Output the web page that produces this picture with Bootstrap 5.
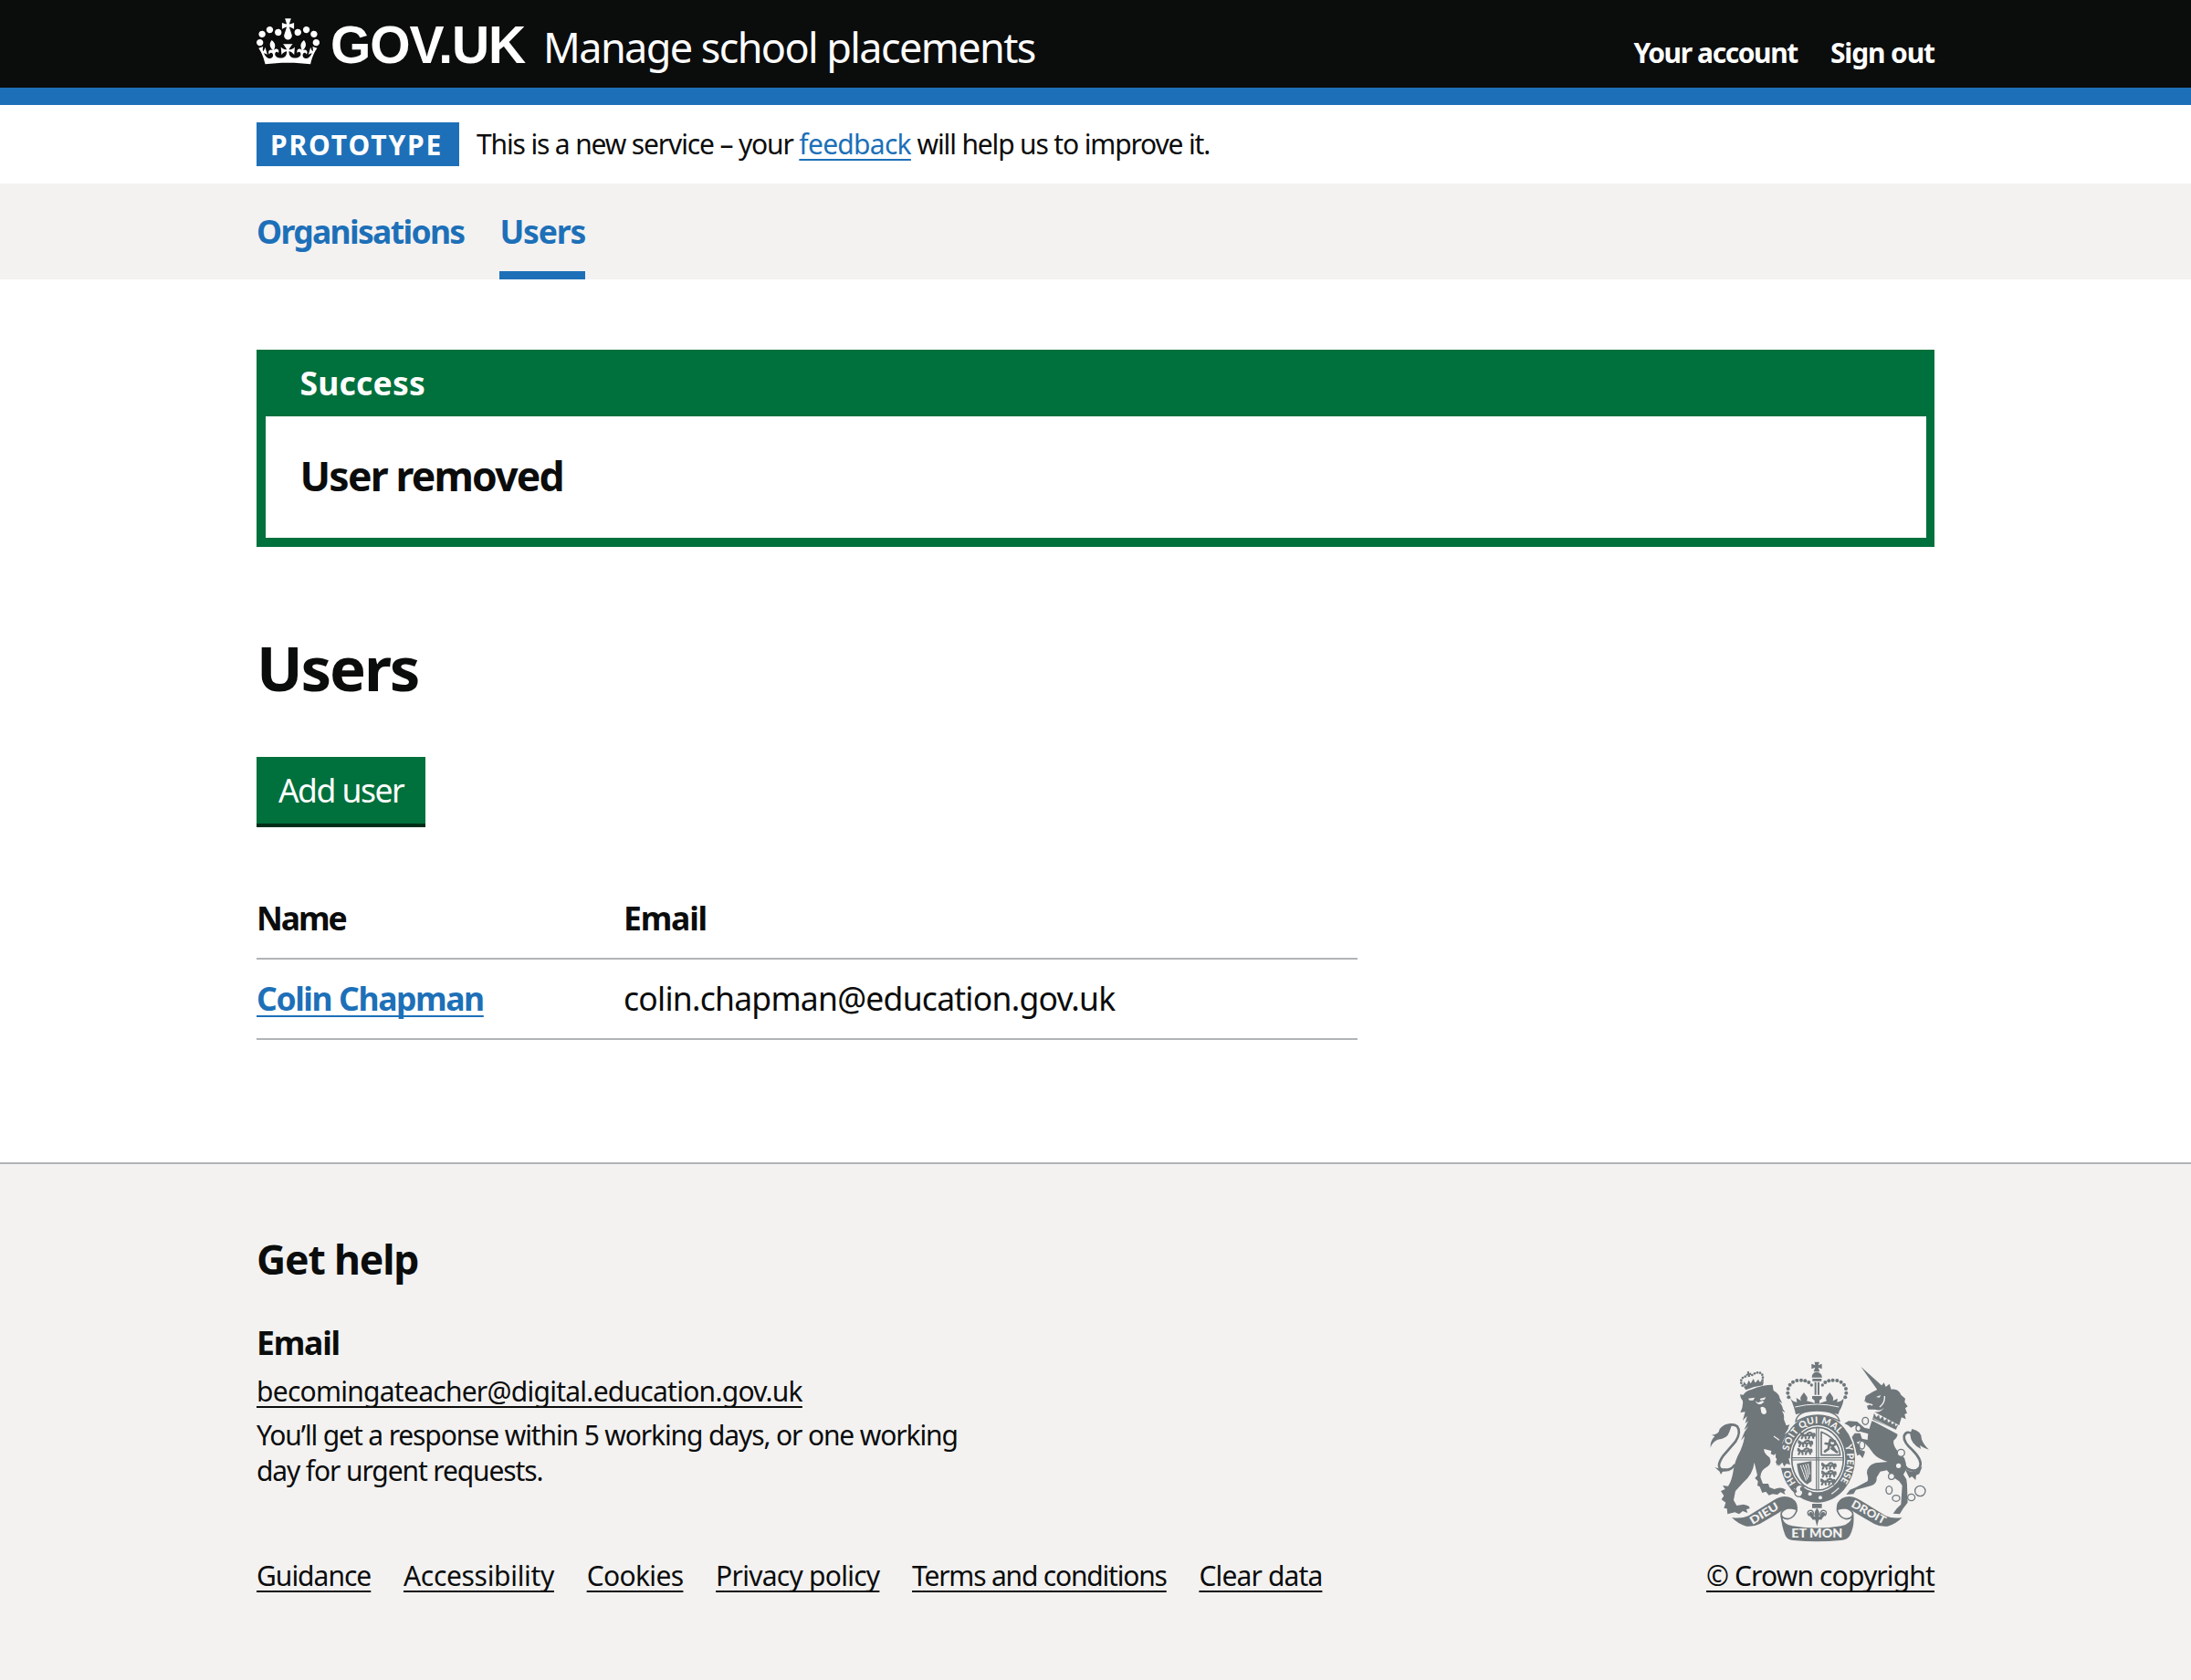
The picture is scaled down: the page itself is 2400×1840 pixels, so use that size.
<!DOCTYPE html>
<html lang="en">
<head>
<meta charset="utf-8">
<meta name="viewport" content="width=device-width, initial-scale=1">
<title>Users - Manage school placements</title>
<link href="https://cdn.jsdelivr.net/npm/bootstrap@5.3.0/dist/css/bootstrap.min.css" rel="stylesheet">
<style>
:root{--ink:#0b0c0c;--blue:#1d70b8;--green:#00703c;--grey-bg:#f3f2f1;--line:#b1b4b6}
body{font-family:"Noto Sans",sans-serif;color:var(--ink);font-size:35.5px;line-height:48px;background:#fff}
.page-width{width:1838px;margin:0 auto}
.t16{font-size:30px;line-height:38px;letter-spacing:-1px}
.t19{font-size:35.5px;line-height:48px;letter-spacing:-1.4px}
.t24{font-size:44.5px;line-height:57px}
.t36{font-size:67px;line-height:77px;letter-spacing:-2.1px}
/* letter spacing per label */
.ls-account{letter-spacing:-1.41px}
.ls-signout{letter-spacing:-1.12px}
.ls-phase{letter-spacing:-1.15px}
.ls-feedback{letter-spacing:-.72px}
.ls-org{letter-spacing:-1.67px}
.ls-users{letter-spacing:-1.2px}
.ls-success{letter-spacing:.2px}
.ls-removed{letter-spacing:-1.8px}
.ls-add{letter-spacing:-1.5px}
.ls-name{letter-spacing:-2.1px}
.ls-email{letter-spacing:-1.2px}
.ls-address{letter-spacing:-.76px}
.ls-help{letter-spacing:-1.15px}
.ls-tight{letter-spacing:-1.13px}
.ls-loose{letter-spacing:-.32px}
.ls-cookies{letter-spacing:-.65px}
.ls-privacy{letter-spacing:-.74px}
.ls-terms{letter-spacing:-1.2px}
.ls-clear{letter-spacing:-.86px}
.site-header{height:96px;background:var(--ink);color:#fff;padding-top:21px}
.blue-bar{height:19px;background:var(--blue)}
.crown-logo{width:69px;height:51px;margin-top:-1px}
.logotype{font-family:"Liberation Sans",sans-serif;font-size:57px;line-height:56px;margin-left:12px;letter-spacing:-1.1px}
.service-name{font-size:45px;line-height:56px;letter-spacing:-1.6px;margin-left:20px}
.account-links{gap:36px}
.phase-bar{height:86px}
.phase-tag{background:var(--blue);color:#fff;height:48px;line-height:48px;padding:1px 15px 0;letter-spacing:1.9px;margin-right:19px;width:222px}
.primary-nav{height:105px;background:var(--grey-bg)}
.primary-nav .page-width{gap:39px}
.primary-nav a{color:var(--blue);height:105px;padding-top:28px;display:block}
.primary-nav a.current{border-bottom:9px solid var(--blue)}
.lnk{color:inherit;text-decoration:underline;text-decoration-thickness:2px;text-underline-offset:4.5px;text-decoration-skip-ink:none}
.lnk-blue{color:var(--blue)}
.banner{background:var(--green);margin-top:77px;padding:0 9.5px 9.5px}
.banner-head{height:73px;padding:12px 38px;color:#fff}
.banner-body{height:133px;background:#fff;padding:36px 38px 0}
.page-title{margin:94px 0 0}
.add-btn{margin-top:59px;height:73px;width:185px;background:var(--green);color:#fff;border:0;border-radius:0;box-shadow:0 4px 0 #002d18;padding:0}
.add-btn:hover{background:#005a30;color:#fff}
.user-table{width:1206px;margin:60px 0 0;border-collapse:collapse}
.user-table th,.user-table td{height:88px;padding:0 0 1px;border-bottom:2px solid var(--line);vertical-align:middle;color:var(--ink)}
.col-name{width:402px}
.site-footer{margin-top:134px;border-top:2px solid var(--line);background:var(--grey-bg);min-height:569px;padding-top:75px}
.help-sub{margin:39px 0 11px}
.help-mail{margin-bottom:9px}
.help-note{line-height:39px}
.footer-links{gap:35.7px;margin-top:77px}
.crest{width:241.3px;height:197.3px;margin-bottom:18px}
</style>
</head>
<body>
<header>
  <div class="site-header">
    <div class="page-width d-flex align-items-baseline">
      <svg class="crown-logo align-self-start" viewBox="0 0 132 97" aria-hidden="true"><path fill="#fff" fill-rule="evenodd" d="M25 30.2c3.5 1.5 7.7-.2 9.1-3.7 1.5-3.6-.2-7.8-3.9-9.2-3.6-1.4-7.6.3-9.1 3.9-1.4 3.5.3 7.5 3.9 9zM9 39.5c3.6 1.5 7.8-.2 9.2-3.7 1.5-3.6-.2-7.8-3.9-9.1-3.6-1.5-7.6.2-9.1 3.8-1.4 3.5.3 7.5 3.8 9zM4.4 57.2c3.5 1.5 7.7-.2 9.1-3.8 1.5-3.6-.2-7.7-3.9-9.1-3.5-1.5-7.6.3-9.1 3.8-1.4 3.5.3 7.6 3.9 9.1zm38.3-21.4c3.5 1.5 7.7-.2 9.1-3.8 1.5-3.6-.2-7.7-3.9-9.1-3.6-1.5-7.6.3-9.1 3.8-1.3 3.6.4 7.7 3.9 9.1zm64.4-5.6c-3.6 1.5-7.8-.2-9.1-3.7-1.5-3.6.2-7.8 3.8-9.2 3.6-1.4 7.7.3 9.2 3.9 1.3 3.5-.4 7.5-3.9 9zm15.9 9.3c-3.6 1.5-7.7-.2-9.1-3.7-1.5-3.6.2-7.8 3.7-9.1 3.6-1.5 7.7.2 9.2 3.8 1.5 3.5-.3 7.5-3.8 9zm4.7 17.7c-3.6 1.5-7.8-.2-9.2-3.8-1.5-3.6.2-7.7 3.9-9.1 3.6-1.5 7.7.3 9.2 3.8 1.3 3.5-.4 7.6-3.9 9.1zM89.3 35.8c-3.6 1.5-7.8-.2-9.2-3.8-1.4-3.6.2-7.7 3.9-9.1 3.6-1.5 7.7.3 9.2 3.8 1.4 3.6-.3 7.7-3.9 9.1zM69.7 17.7l8.9 4.7V9.3l-8.9 2.8c-.2-.3-.5-.6-.9-.9L72.4 0H59.6l3.5 11.2c-.3.3-.6.5-.9.9l-8.8-2.8v13.1l8.8-4.7c.3.3.6.7.9.9l-5 15.4v.1c-.2.8-.4 1.6-.4 2.4 0 4.1 3.1 7.5 7 8.1h.2c.3 0 .7.1 1 .1.4 0 .7 0 1-.1h.2c4-.6 7.1-4.1 7.1-8.1 0-.8-.1-1.7-.4-2.4V34l-5.1-15.4c.4-.2.7-.6 1-.9zM66 92.8c16.9 0 32.8 1.1 47.1 3.2 4-16.9 8.9-26.7 14-33.5l-9.6-3.4c1 4.9 1.1 7.2 0 10.2-1.5-1.4-3-4.3-4.2-8.7L108.6 76c2.8-2 5-3.2 7.5-3.3-4.4 9.4-10 11.9-13.6 11.2-4.3-.8-6.3-4.6-5.6-7.9 1-4.7 5.7-5.9 8-.5 4.3-8.7-3-11.4-7.6-8.8 7.1-7.2 7.9-13.5 2.1-21.1-8 6.1-8.1 12.3-4.5 20.8-4.7-5.4-12.1-2.5-9.5 6.2 3.4-5.2 7.9-2 7.2 3.1-.6 4.3-6.4 7.8-13.5 7.2-10.3-.9-10.9-8-11.2-13.8 2.5-.5 7.1 1.8 11 7.3L80.2 60c-4.1 4.4-8 5.3-12.3 5.4 1.4-4.4 8-11.6 8-11.6H55.5s6.4 7.2 7.9 11.6c-4.2-.1-8-1-12.3-5.4l1.4 16.4c3.9-5.5 8.5-7.7 10.9-7.3-.3 5.8-.9 12.8-11.1 13.8-7.2.6-12.9-2.9-13.5-7.2-.7-5 3.8-8.3 7.1-3.1 2.7-8.7-4.6-11.6-9.4-6.2 3.7-8.5 3.6-14.7-4.6-20.8-5.8 7.6-5 13.9 2.2 21.1-4.7-2.6-11.9.1-7.7 8.8 2.3-5.5 7.1-4.2 8.1.5.7 3.3-1.3 7.1-5.7 7.9-3.5.7-9-1.8-13.5-11.2 2.5.1 4.7 1.3 7.5 3.3l-4.7-15.4c-1.2 4.4-2.7 7.2-4.3 8.7-1.1-3-.9-5.3 0-10.2l-9.5 3.4c5 6.9 9.9 16.7 14 33.5 14.8-2.1 30.8-3.2 47.7-3.2z"/></svg>
      <span class="logotype fw-bold">GOV.UK</span>
      <span class="service-name">Manage school placements</span>
      <nav class="account-links d-flex ms-auto">
        <a href="#" class="t16 fw-bold text-white text-decoration-none ls-account">Your account</a>
        <a href="#" class="t16 fw-bold text-white text-decoration-none ls-signout">Sign out</a>
      </nav>
    </div>
  </div>
  <div class="blue-bar"></div>
  <div class="phase-bar d-flex align-items-center">
    <div class="page-width d-flex align-items-center">
      <strong class="phase-tag t16">PROTOTYPE</strong>
      <span class="t16 ls-phase">This is a new service – your <a href="#" class="lnk lnk-blue ls-feedback">feedback</a> will help us to improve it.</span>
    </div>
  </div>
  <nav class="primary-nav">
    <div class="page-width d-flex">
      <a href="#" class="t19 fw-bold text-decoration-none ls-org">Organisations</a>
      <a href="#" class="t19 fw-bold text-decoration-none current ls-users">Users</a>
    </div>
  </nav>
</header>

<main class="page-width">
  <section class="banner">
    <div class="banner-head t19 fw-bold ls-success">Success</div>
    <div class="banner-body t24 fw-bold ls-removed">User removed</div>
  </section>
  <h1 class="page-title t36 fw-bold">Users</h1>
  <button class="btn add-btn t19 d-block ls-add">Add user</button>
  <table class="user-table t19">
    <thead><tr><th class="col-name fw-bold ls-name">Name</th><th class="fw-bold ls-email">Email</th></tr></thead>
    <tbody><tr><td><a href="#" class="lnk lnk-blue fw-bold">Colin Chapman</a></td><td class="ls-address">colin.chapman@education.gov.uk</td></tr></tbody>
  </table>
</main>

<footer class="site-footer">
  <div class="page-width d-flex justify-content-between align-items-end">
    <div>
      <h2 class="t24 fw-bold mb-0 ls-help">Get help</h2>
      <h3 class="help-sub t19 fw-bold ls-email">Email</h3>
      <div class="t16 help-mail ls-privacy"><a href="#" class="lnk">becomingateacher@digital.education.gov.uk</a></div>
      <div class="t16 help-note ls-tight">You’ll get a response within 5 working days, or one working<br>day for urgent requests.</div>
      <div class="footer-links d-flex t16">
        <a href="#" class="lnk">Guidance</a>
        <a href="#" class="lnk ls-loose">Accessibility</a>
        <a href="#" class="lnk ls-cookies">Cookies</a>
        <a href="#" class="lnk ls-privacy">Privacy policy</a>
        <a href="#" class="lnk ls-terms">Terms and conditions</a>
        <a href="#" class="lnk ls-clear">Clear data</a>
      </div>
    </div>
    <div class="d-flex flex-column align-items-center">
      <svg class="crest" viewBox="40 30 724 592" role="img" aria-label="Royal coat of arms">
        <defs>
          <path id="garter" d="M394 466A97 116 0 0 1 394 234A97 116 0 0 1 394 466"/>
          <g id="passant" fill="none" stroke="#6f777b" stroke-width="6.5" stroke-linecap="round" stroke-linejoin="round"><path d="M4 5l6 3 8-2 14 2 10-3M10 8l-4 9M17 8l2 9M32 8l-3 9M41 7l3 9M42 4q8-6 6 5M4 0l6 4M24 2l8-4 6 2"/></g>
          <g id="ribbonside">
            <path fill="#6f777b" d="M112 543Q142 548 166 538L250 486Q282 466 310 480Q332 494 327 522L318 535Q314 512 298 512Q284 515 262 530L204 564Q186 574 160 572Q132 564 112 543Z"/>
            <path fill="#f3f2f1" stroke="#6f777b" stroke-width="5" d="M326 518Q318 545 296 548Q276 546 274 532Q276 518 298 512Q322 514 326 518M274 532Q276 560 292 574"/>
          </g>
        </defs>
        <g fill="#6f777b">
          <!-- lion's crown -->
          <path d="M151 113Q183 97 217 97L214 109Q185 112 158 124Z"/>
          <path d="M148 111l4-14 9 10 7-15 6 11 9-16 6 14 10-12 5 11 7-8 3 15q-35-3-66 4z"/>
          <path d="M164 82l9-2-2-6 6 2-2-9-5 3-2-8-6 2 2 7-6 0 3 8 5-4z"/>
          <g><circle cx="147" cy="110" r="4"/><circle cx="143" cy="101" r="4"/><circle cx="143" cy="92" r="4"/><circle cx="148" cy="84" r="4"/><circle cx="156" cy="80" r="4"/><circle cx="179" cy="75" r="4"/><circle cx="187" cy="70" r="4"/><circle cx="196" cy="67" r="4"/><circle cx="205" cy="68" r="4"/><circle cx="212" cy="74" r="4"/><circle cx="214" cy="83" r="4"/><circle cx="213" cy="92" r="4"/></g>
          <!-- lion -->
          <path d="M139 139L150 140Q156 128 178 122Q212 107 246 107L249 126Q268 136 270 152L278 168L266 161Q280 176 280 187L288 198L277 193Q286 207 283 220L291 241L302 238L297 250L304 262L292 275L285 300L302 330L296 348L302 371L288 366L282 374L276 362L265 362L262 374L256 360L262 350L268 344L256 348L256 338L264 328L250 338L240 334L242 324L218 318Q216 332 236 346Q246 366 226 378Q208 386 206 410L214 432L232 432L236 444L252 450Q272 440 290 452L284 458L288 468L272 460L262 468L246 466L234 470L224 458L212 462L204 442L196 438L198 424L188 414L196 404L186 362Q182 400 148 430L124 456L118 486L128 504L150 500Q174 504 170 514L160 516L164 528L148 522L136 532L122 526L98 532L96 514L86 512L92 494L78 484L86 472L76 456L90 450L82 438L100 440Q112 424 118 384Q122 356 140 324Q152 296 154 276L142 290L154 262L166 244L152 256L166 226L156 234L162 210L148 224L156 196L140 198Q150 180 148 160Q140 152 139 139Z"/>
          <!-- unicorn -->
          <path d="M536 47L610 114L592 126Z"/>
          <path d="M612 100L618 114L630 104L636 122Q660 120 668 140L682 152L680 164L690 178L682 184L688 200L680 204L684 220L670 214L662 240L580 196Q604 200 616 176Q606 196 582 188L560 188L556 176L568 172L556 166L548 162L552 144L576 130L596 120Z"/>
          <path d="M572 226Q600 228 656 262Q660 278 644 290Q640 310 664 332Q690 352 684 388L676 402L686 418L688 434L690 494L676 512L664 532L642 530L654 514L668 500L672 438L662 424L638 408L622 388L600 392L588 412Q590 430 572 438L520 452L512 466L488 468L500 452L520 444L558 424Q562 412 556 398Q556 372 584 364L624 360Q594 352 578 334L562 312L548 298L534 292L522 296L536 308L534 320L550 326L548 334L542 348L532 336L524 340L520 328L502 308L506 296L498 290L516 266L534 266L540 284L558 288L560 268L532 260L518 240L504 248L494 240L482 234L496 226L524 228L548 248L564 252Z"/>
        </g>
        <!-- faces, coronet and separating lines -->
        <g fill="#f3f2f1">
          <path d="M166 152l22-3-6 9-12 0zM204 153l20-5-5 8-12 2zM190 160l8 6 14-6 7 3-10 7q-14 5-19-10z"/><path d="M206 182q8-6 16 2l4 10q0 10-9 10-9-1-9-12z"/>
          <path d="M586 147l16-6-5 8zM558 166l18 6-4 4zM550 160l3 3-4 2z"/>
          <path d="M578 198L666 246L658 270L572 224Z"/>
        </g>
        <path fill="none" stroke="#f3f2f1" stroke-width="4" d="M598 180q18-14 16-36M250 276q36 22 50 56"/>
        <path fill="#6f777b" stroke="#6f777b" stroke-width="1" d="M575 221l5-19 7 12 8-8 4 14 10-9 3 15 11-8 2 14 11-7 1 13 11-6 1 12 9-5-7 15z"/>
        <path fill="none" stroke="#f3f2f1" stroke-width="2" d="M578 218L656 259"/>
        <!-- tails -->
        <g fill="none" stroke="#6f777b" stroke-width="8" stroke-linecap="round"><path d="M88 250Q112 230 130 244Q144 262 124 294L84 340Q58 378 80 386Q108 390 120 372"/><path d="M708 270Q686 254 678 276Q676 296 706 322Q740 356 730 378Q714 398 688 382Q674 370 676 350"/></g>
        <g fill="#6f777b"><path d="M72 252Q88 232 114 234L104 262Q98 284 66 287Q48 294 42 314Q40 292 56 276L46 272Q70 270 72 252Z"/><path d="M704 252Q738 260 736 286Q742 304 760 320Q738 312 730 306L734 318Q700 302 698 270Z"/><path d="M56 378q18 6 34 4l16 8-24 2-6 10-4-10zM680 382q18 14 34 10l24-16-10 24-10 4-2 16-12-12-8 6z"/></g>
        <!-- chain -->
        <g fill="none" stroke="#6f777b" stroke-width="4"><ellipse cx="551" cy="226" rx="10" ry="12" fill="#f3f2f1"/><ellipse cx="528" cy="250" rx="8" ry="10" fill="#f3f2f1"/><ellipse cx="540" cy="305" rx="9" ry="13" fill="#f3f2f1"/><ellipse cx="668" cy="331" rx="12" ry="12" fill="#f3f2f1"/><circle cx="660" cy="373" r="10" fill="#f3f2f1"/><circle cx="637" cy="408" r="10" fill="#f3f2f1"/><ellipse cx="629" cy="453" rx="10" ry="13"/><ellipse cx="652" cy="480" rx="12" ry="10"/><ellipse cx="702" cy="477" rx="12" ry="11"/><circle cx="731" cy="456" r="17"/></g>
        <!-- main crown -->
        <g fill="#6f777b">
          <path d="M384 32h16l-4 11 12-5v17l-12-5 5 14h-20l5-14-12 5V38l12 5zM375 83q0-16 16-18 16 2 18 18zM377 87h30v8h-30zM384 98h6v42h-6zM394 98h6v42h-6z"/>
          <path d="M304 150Q312 164 326 164L324 150 340 160Q334 150 342 142L349 132L356 142Q364 150 358 160L376 164 384 168V158L376 152V144H408V152L400 158V168L424 160Q418 150 426 142L434 132L441 142Q448 150 444 160L460 152 458 164Q474 162 480 150Q478 174 466 192L462 204Q394 186 322 204Q318 182 304 150Z"/>
          <g id="pearls"><circle cx="299" cy="148" r="6"/><circle cx="296" cy="134" r="6"/><circle cx="297" cy="120" r="6"/><circle cx="303" cy="107" r="6"/><circle cx="313" cy="98" r="6"/><circle cx="326" cy="93" r="6"/><circle cx="340" cy="92" r="6"/><circle cx="353" cy="94" r="6"/><circle cx="365" cy="99" r="6"/><circle cx="374" cy="108" r="5"/></g>
          <use href="#pearls" transform="matrix(-1 0 0 1 784 0)"/>
        </g>
        <path fill="none" stroke="#f3f2f1" stroke-width="3" d="M320 180Q392 162 464 180"/>
        <!-- garter and shield -->
        <ellipse cx="394" cy="350" rx="128" ry="149" fill="#f3f2f1"/>
        <ellipse cx="394" cy="350" rx="123" ry="144" fill="#6f777b"/>
        <path d="M322 228Q326 192 392 192Q458 192 466 226Q392 186 322 228Z" fill="#f3f2f1" stroke="#6f777b" stroke-width="4"/>
        <path d="M298 262Q276 290 271 330L300 372 262 368 256 330 270 280Z" fill="#6f777b"/>
        <ellipse cx="394" cy="350" rx="91" ry="110" fill="#f3f2f1"/>
        <ellipse cx="394" cy="350" rx="85" ry="103" fill="#f3f2f1" stroke="#6f777b" stroke-width="5"/>
        <g stroke="#6f777b" stroke-width="3.5" fill="none"><path d="M390 247V453M397 247V453M309 347H479M309 354H479"/></g>
        <use href="#passant" x="336" y="266"/><use href="#passant" x="328" y="292"/><use href="#passant" x="326" y="318"/>
        <use href="#passant" x="405" y="366"/><use href="#passant" x="405" y="392"/><use href="#passant" x="402" y="418"/>
        <g fill="none" stroke="#6f777b" stroke-width="5" stroke-linejoin="round"><path d="M406 262V338H468Q464 286 406 262Z"/><path stroke-width="8" stroke-linecap="round" d="M418 326l12-8 2-16 10 6 12 18M420 300l12 2 4-14 8 4M442 308l12-6-4-10M440 316l18 12"/></g>
        <path fill="#6f777b" d="M326 366l48-8v66l-14 10q-30-14-34-68z"/><path fill="none" stroke="#f3f2f1" stroke-width="3" d="M338 372q8 20 18 50M346 370q8 16 14 48M354 368q6 14 10 44M362 366q4 10 6 36"/>
        <!-- paw over the garter, buckle -->
        <path fill="#f3f2f1" d="M262 340l44 10 2 30-34 0z"/><path fill="#6f777b" d="M252 300L286 300 302 332 298 346 304 370 292 366 284 376 278 362 266 374 262 352Z"/>
        <path fill="none" stroke="#f3f2f1" stroke-width="4" d="M318 448Q326 456 336 460M440 466Q454 456 464 446"/>
        <path fill="#f3f2f1" stroke="#6f777b" stroke-width="4" d="M324 442q12-12 24 0q-14 2-8 12 8 2 4 12-4 14-20 6-10-8 0-14-6-8 0-16z"/>
        <circle cx="369" cy="466" r="6" fill="#f3f2f1"/><circle cx="403" cy="478" r="6" fill="#f3f2f1"/>
        <g fill="#f3f2f1" font-family="Lato, sans-serif" font-weight="900" font-size="31">
          <text><textPath href="#garter" startOffset="82">HO</textPath></text>
          <text letter-spacing="1.2"><textPath href="#garter" startOffset="193">SOIT QUI MAL</textPath></text>
          <text><textPath href="#garter" startOffset="458">Y PENSE</textPath></text>
        </g>
        <!-- motto ribbon -->
        <path fill="#6f777b" d="M376 498h32v14h-32zM392 512q12 14 6 28 6 2 6-6 2-12 12-8 8 8-2 14l-8 10h-8l-6 22-6-22h-8l-8-10q-10-6-2-14 10-4 12 8 0 8 6 6-6-14 6-28z"/>
        <path fill="none" stroke="#6f777b" stroke-width="4" d="M366 538q-10-14 2-18 14-2 14 18M418 538q10-14-2-18-14-2-14 18M376 548h32"/>
        <use href="#ribbonside"/><use href="#ribbonside" transform="matrix(-1 0 0 1 784 0)"/>
        <path fill="#6f777b" d="M272 534Q282 568 312 571Q392 584 472 571Q502 566 512 534Q516 572 500 602Q492 616 470 618Q392 626 314 618Q294 616 288 602Q278 580 272 534Z"/>
        <g fill="#f3f2f1" font-family="Lato, sans-serif" font-weight="900" font-size="42">
          <text x="308" y="610" textLength="168" lengthAdjust="spacingAndGlyphs">ET MON</text>
          <text transform="translate(180 567) rotate(-31)" font-size="36" textLength="104" lengthAdjust="spacingAndGlyphs">DIEU</text>
          <text transform="translate(502 506) rotate(29)" font-size="36" textLength="124" lengthAdjust="spacingAndGlyphs">DROIT</text>
        </g>
      </svg>
      <a href="#" class="lnk t16 ls-clear">© Crown copyright</a>
    </div>
  </div>
</footer>
<script src="https://cdn.jsdelivr.net/npm/bootstrap@5.3.0/dist/js/bootstrap.bundle.min.js"></script>
</body>
</html>
